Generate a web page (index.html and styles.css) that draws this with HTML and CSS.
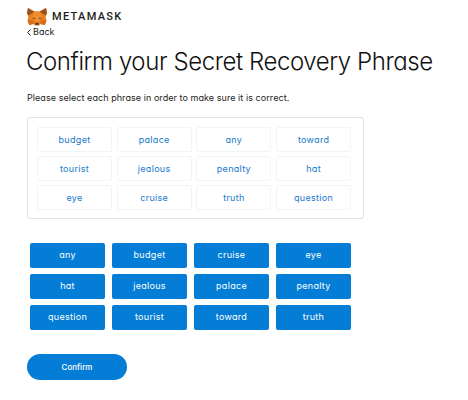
FILE: index.html
```
<!DOCTYPE html>
<html lang="en">
<head>
<meta charset="utf-8">
<title>MetaMask</title>
<link rel="stylesheet" href="styles.css">
</head>
<body>
<main class="page">
  <header class="brand">
    <svg class="fox" viewBox="0 0 20 18" aria-hidden="true">
      <path fill="#e8821e" d="M1 0L7.5 3.5H12.5L19 0L20 5L18.6 9L19.5 12.5L17.8 17L13.5 16L11.5 18H8.5L6.5 16L2.2 17L.5 12.5L1.4 9L0 5Z"/>
      <path fill="#9a5220" d="M1 0L7.2 3.6L5.6 5L1.4 7.5L0 5ZM19 0L12.8 3.6L14.4 5L18.6 7.5L20 5Z"/>
      <path fill="#f28b2c" d="M7.2 3.5H12.8L14.5 8.5L12 14H8L5.5 8.5Z"/>
      <path fill="#d86b1d" d="M.5 12.5L6 12L6.5 16L2.2 17ZM19.5 12.5L14 12L13.5 16L17.8 17Z"/>
      <path fill="#5a3c2a" d="M5 10.3L7.7 9.5L7.9 11ZM15 10.3L12.3 9.5L12.1 11ZM8.4 14.8H11.6L12 16.8H8Z"/>
      <path fill="#d6bfb2" d="M6.5 16L8 17H12L13.5 16L11.5 18H8.5Z"/>
    </svg>
    <span class="wordmark">METAMASK</span>
  </header>
  <a class="back"><svg class="chevron" viewBox="0 0 4 7"><path d="M3.4 .6L.7 3.5L3.4 6.4"/></svg>Back</a>
  <h1 class="title">Confirm your Secret Recovery Phrase</h1>
  <p class="hint">Please select each phrase in order to make sure it is correct.</p>
  <section class="selected">
    <span class="slot">budget</span><span class="slot">palace</span><span class="slot">any</span><span class="slot">toward</span>
    <span class="slot">tourist</span><span class="slot">jealous</span><span class="slot">penalty</span><span class="slot">hat</span>
    <span class="slot">eye</span><span class="slot">cruise</span><span class="slot">truth</span><span class="slot">question</span>
  </section>
  <section class="words">
    <button class="word">any</button><button class="word">budget</button><button class="word">cruise</button><button class="word">eye</button>
    <button class="word">hat</button><button class="word">jealous</button><button class="word">palace</button><button class="word">penalty</button>
    <button class="word">question</button><button class="word">tourist</button><button class="word">toward</button><button class="word">truth</button>
  </section>
  <button class="confirm">Confirm</button>
</main>
</body>
</html>
```
FILE: styles.css
```
* { box-sizing: border-box; }
body {
  margin: 0;
  background: #fff;
  color: #1c1e20;
  font-family: Inter, Lato, sans-serif;
  font-feature-settings: "cv11", "ss03";
}
.page { padding: 8px 0 0 27px; }
.brand { display: flex; align-items: center; height: 18px; }
.fox { width: 20px; height: 18px; }
.wordmark {
  margin-left: 5px;
  font: 500 11px/18px Roboto, sans-serif;
  letter-spacing: 1.3px;
}
.back { display: flex; align-items: center; height: 12px; font-size: 9px; line-height: 12px; }
.chevron { width: 4px; height: 7px; margin-right: 2px; fill: none; stroke: #1c1e20; stroke-width: 1; }
.title {
  margin: 6px 0 0 -1px;
  font-size: 24px;
  font-weight: 300;
  line-height: 36px;
  letter-spacing: -0.42px;
  white-space: nowrap;
  color: #111;
}
.hint { margin: 11px 0 0; font-size: 9px; line-height: 14px; letter-spacing: 0.06px; white-space: nowrap; }
.selected {
  display: grid;
  grid-template-columns: repeat(4, 75px);
  grid-auto-rows: 25px;
  gap: 4px 4.7px;
  width: 337px;
  height: 102px;
  margin-top: 12px;
  padding: 9px;
  border: 1px solid #e0e2e3;
  border-radius: 3px;
}
.slot, .word {
  display: flex;
  align-items: center;
  justify-content: center;
  padding: 0;
  border-radius: 2px;
  font: 400 9px/12px Inter, Lato, sans-serif;
  font-feature-settings: inherit;
}
.slot { border: 1px solid #eff6f8; color: #1779cb; letter-spacing: 0.3px; }
.words {
  display: grid;
  grid-template-columns: repeat(4, 75px);
  grid-auto-rows: 24.5px;
  gap: 6.6px 7px;
  margin: 24px 0 0 3px;
}
.word { border: 0; background: #037dd6; color: #fff; letter-spacing: 0.3px; }
.confirm {
  display: block;
  width: 100px;
  height: 26px;
  margin-top: 24px;
  padding: 0;
  border: 0;
  border-radius: 13px;
  background: #037dd6;
  color: #fff;
  font: 500 8px/12px Inter, Lato, sans-serif;
  font-feature-settings: inherit;
}
```
